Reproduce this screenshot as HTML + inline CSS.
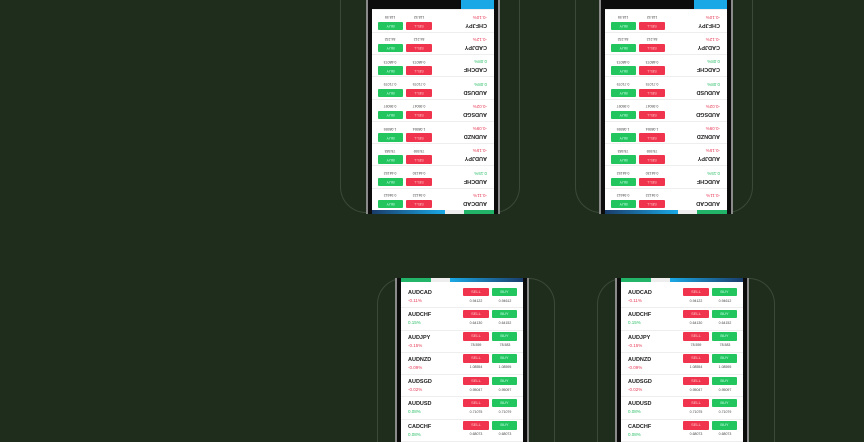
<!DOCTYPE html>
<html><head><meta charset="utf-8"><style>
*{margin:0;padding:0;box-sizing:border-box}
html{width:864px;height:442px;overflow:hidden}
body{width:864px;height:442px;background:#1f2e1c;position:relative;overflow:hidden;font-family:"Liberation Sans",sans-serif}
.ol{position:absolute;border:1px solid #3b4a38}
.olt{border-top:none;border-radius:0 0 26px 26px}
.olb{border-bottom:none;border-radius:26px 26px 0 0}
.ph{position:absolute;width:134px;background:#0c0c0c;border-left:2px solid #8a8a8a;border-right:2px solid #8a8a8a;padding:0 4px;overflow:hidden}
.sc{background:#fff;width:122px;height:100%;position:relative;overflow:hidden}
.strip{height:4px;display:flex}
.strip i{display:block;height:4px}
.row{height:22.3px;position:relative;border-bottom:1px solid #eee}
.n{position:absolute;left:7px;top:4px;font-size:5.5px;font-weight:bold;color:#222}
.p{position:absolute;left:7px;top:12px;font-size:4.5px}
.r{color:#e8405a}.g{color:#2fbf6a}
.s{position:absolute;left:62px;top:1.5px;width:26px;height:8.5px;background:#f0344e;border-radius:1px;color:#fcc;font-size:4px;text-align:center;line-height:8.5px}
.b{position:absolute;left:91px;top:1.5px;width:25px;height:8.5px;background:#22c55e;border-radius:1px;color:#cfe;font-size:4px;text-align:center;line-height:8.5px}
.q{position:absolute;top:12.5px;font-size:3.5px;color:#444;width:26px;text-align:center}
.q1{left:62px}.q2{left:91px}
.nav{height:10px;background:#0c0c0c;position:relative}
.nav i{position:absolute;left:0;top:0;width:33px;height:10px;background:#1aa9e6}
.rot{transform:rotate(180deg)}
.sp{height:4px}
</style></head><body>

<div class="ol olt" style="left:340px;top:0;width:180px;height:213px"></div>
<div class="ol olt" style="left:575px;top:0;width:178px;height:213px"></div>
<div class="ol olb" style="left:377px;top:278px;width:178px;height:164px"></div>
<div class="ol olb" style="left:597px;top:278px;width:178px;height:164px"></div>

<!-- top phone 1 -->
<div class="ph rot" style="left:366px;top:0;height:214px">
<div class="sc">
<div class="strip"><i style="width:30px;background:#22b56a"></i><i style="width:19px;background:#eee"></i><i style="width:73px;background:linear-gradient(90deg,#1aa9e6,#1a3c6a)"></i></div>
<div class="row"><span class="n">AUDCAD</span><span class="p r">-0.11%</span><span class="s">SELL</span><span class="b">BUY</span><span class="q q1">0.94122</span><span class="q q2">0.94612</span></div>
<div class="row"><span class="n">AUDCHF</span><span class="p g">0.15%</span><span class="s">SELL</span><span class="b">BUY</span><span class="q q1 g">0.64130</span><span class="q q2 g">0.64152</span></div>
<div class="row"><span class="n">AUDJPY</span><span class="p r">-0.15%</span><span class="s">SELL</span><span class="b">BUY</span><span class="q q1 g">78.559</span><span class="q q2 g">78.583</span></div>
<div class="row"><span class="n">AUDNZD</span><span class="p r">-0.09%</span><span class="s">SELL</span><span class="b">BUY</span><span class="q q1">1.08554</span><span class="q q2">1.08595</span></div>
<div class="row"><span class="n">AUDSGD</span><span class="p r">-0.02%</span><span class="s">SELL</span><span class="b">BUY</span><span class="q q1">0.95047</span><span class="q q2">0.95097</span></div>
<div class="row"><span class="n">AUDUSD</span><span class="p g">0.08%</span><span class="s">SELL</span><span class="b">BUY</span><span class="q q1">0.71075</span><span class="q q2">0.71079</span></div>
<div class="row"><span class="n">CADCHF</span><span class="p g">0.08%</span><span class="s">SELL</span><span class="b">BUY</span><span class="q q1">0.68073</span><span class="q q2">0.68073</span></div>
<div class="row"><span class="n">CADJPY</span><span class="p r">-0.12%</span><span class="s">SELL</span><span class="b">BUY</span><span class="q q1">84.212</span><span class="q q2">84.232</span></div>
<div class="row"><span class="n">CHFJPY</span><span class="p r">-0.10%</span><span class="s">SELL</span><span class="b">BUY</span><span class="q q1">118.52</span><span class="q q2">118.55</span></div>
<div class="nav"><i></i></div>
</div></div>

<!-- top phone 2 -->
<div class="ph rot" style="left:599px;top:0;height:214px">
<div class="sc">
<div class="strip"><i style="width:30px;background:#22b56a"></i><i style="width:19px;background:#eee"></i><i style="width:73px;background:linear-gradient(90deg,#1aa9e6,#1a3c6a)"></i></div>
<div class="row"><span class="n">AUDCAD</span><span class="p r">-0.11%</span><span class="s">SELL</span><span class="b">BUY</span><span class="q q1">0.94122</span><span class="q q2">0.94612</span></div>
<div class="row"><span class="n">AUDCHF</span><span class="p g">0.15%</span><span class="s">SELL</span><span class="b">BUY</span><span class="q q1 g">0.64130</span><span class="q q2 g">0.64152</span></div>
<div class="row"><span class="n">AUDJPY</span><span class="p r">-0.15%</span><span class="s">SELL</span><span class="b">BUY</span><span class="q q1 g">78.559</span><span class="q q2 g">78.583</span></div>
<div class="row"><span class="n">AUDNZD</span><span class="p r">-0.09%</span><span class="s">SELL</span><span class="b">BUY</span><span class="q q1">1.08554</span><span class="q q2">1.08595</span></div>
<div class="row"><span class="n">AUDSGD</span><span class="p r">-0.02%</span><span class="s">SELL</span><span class="b">BUY</span><span class="q q1">0.95047</span><span class="q q2">0.95097</span></div>
<div class="row"><span class="n">AUDUSD</span><span class="p g">0.08%</span><span class="s">SELL</span><span class="b">BUY</span><span class="q q1">0.71075</span><span class="q q2">0.71079</span></div>
<div class="row"><span class="n">CADCHF</span><span class="p g">0.08%</span><span class="s">SELL</span><span class="b">BUY</span><span class="q q1">0.68073</span><span class="q q2">0.68073</span></div>
<div class="row"><span class="n">CADJPY</span><span class="p r">-0.12%</span><span class="s">SELL</span><span class="b">BUY</span><span class="q q1">84.212</span><span class="q q2">84.232</span></div>
<div class="row"><span class="n">CHFJPY</span><span class="p r">-0.10%</span><span class="s">SELL</span><span class="b">BUY</span><span class="q q1">118.52</span><span class="q q2">118.55</span></div>
<div class="nav"><i></i></div>
</div></div>

<!-- bottom phone 1 -->
<div class="ph" style="left:395px;top:278px;height:164px">
<div class="sc">
<div class="strip"><i style="width:30px;background:#22b56a"></i><i style="width:19px;background:#eee"></i><i style="width:73px;background:linear-gradient(90deg,#1aa9e6,#1a3c6a)"></i></div>
<div class="sp"></div>
<div class="row"><span class="n">AUDCAD</span><span class="p r">-0.11%</span><span class="s">SELL</span><span class="b">BUY</span><span class="q q1">0.94122</span><span class="q q2">0.94612</span></div>
<div class="row"><span class="n">AUDCHF</span><span class="p g">0.15%</span><span class="s">SELL</span><span class="b">BUY</span><span class="q q1 g">0.64130</span><span class="q q2 g">0.64152</span></div>
<div class="row"><span class="n">AUDJPY</span><span class="p r">-0.15%</span><span class="s">SELL</span><span class="b">BUY</span><span class="q q1 g">78.559</span><span class="q q2 g">78.583</span></div>
<div class="row"><span class="n">AUDNZD</span><span class="p r">-0.09%</span><span class="s">SELL</span><span class="b">BUY</span><span class="q q1">1.08554</span><span class="q q2">1.08595</span></div>
<div class="row"><span class="n">AUDSGD</span><span class="p r">-0.02%</span><span class="s">SELL</span><span class="b">BUY</span><span class="q q1">0.95047</span><span class="q q2">0.95097</span></div>
<div class="row"><span class="n">AUDUSD</span><span class="p g">0.08%</span><span class="s">SELL</span><span class="b">BUY</span><span class="q q1">0.71075</span><span class="q q2">0.71079</span></div>
<div class="row"><span class="n">CADCHF</span><span class="p g">0.08%</span><span class="s">SELL</span><span class="b">BUY</span><span class="q q1">0.68073</span><span class="q q2">0.68073</span></div>
</div></div>

<!-- bottom phone 2 -->
<div class="ph" style="left:615px;top:278px;height:164px">
<div class="sc">
<div class="strip"><i style="width:30px;background:#22b56a"></i><i style="width:19px;background:#eee"></i><i style="width:73px;background:linear-gradient(90deg,#1aa9e6,#1a3c6a)"></i></div>
<div class="sp"></div>
<div class="row"><span class="n">AUDCAD</span><span class="p r">-0.11%</span><span class="s">SELL</span><span class="b">BUY</span><span class="q q1">0.94122</span><span class="q q2">0.94612</span></div>
<div class="row"><span class="n">AUDCHF</span><span class="p g">0.15%</span><span class="s">SELL</span><span class="b">BUY</span><span class="q q1 g">0.64130</span><span class="q q2 g">0.64152</span></div>
<div class="row"><span class="n">AUDJPY</span><span class="p r">-0.15%</span><span class="s">SELL</span><span class="b">BUY</span><span class="q q1 g">78.559</span><span class="q q2 g">78.583</span></div>
<div class="row"><span class="n">AUDNZD</span><span class="p r">-0.09%</span><span class="s">SELL</span><span class="b">BUY</span><span class="q q1">1.08554</span><span class="q q2">1.08595</span></div>
<div class="row"><span class="n">AUDSGD</span><span class="p r">-0.02%</span><span class="s">SELL</span><span class="b">BUY</span><span class="q q1">0.95047</span><span class="q q2">0.95097</span></div>
<div class="row"><span class="n">AUDUSD</span><span class="p g">0.08%</span><span class="s">SELL</span><span class="b">BUY</span><span class="q q1">0.71075</span><span class="q q2">0.71079</span></div>
<div class="row"><span class="n">CADCHF</span><span class="p g">0.08%</span><span class="s">SELL</span><span class="b">BUY</span><span class="q q1">0.68073</span><span class="q q2">0.68073</span></div>
</div></div>

</body></html>
